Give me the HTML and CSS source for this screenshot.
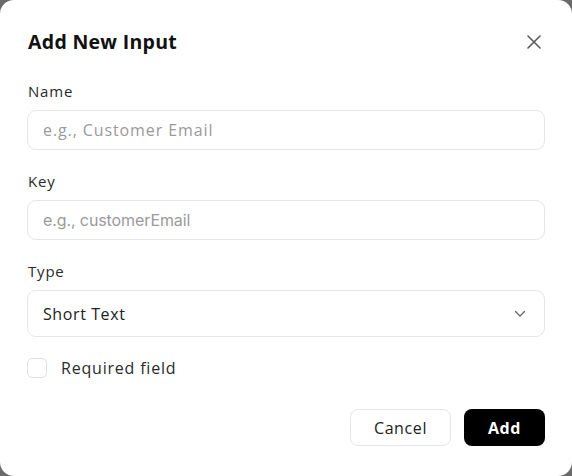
FILE: index.html
```html
<!DOCTYPE html>
<html lang="en">
<head>
<meta charset="utf-8">
<title>Add New Input</title>
<link rel="stylesheet" href="styles.css">
</head>
<body>
<div class="dialog">
  <div class="header">
    <h2 class="title">Add New Input</h2>
    <button class="close" aria-label="Close">
      <svg width="14" height="14" viewBox="0 0 14 14"><path d="M1 1L13 13M13 1L1 13" stroke="#5a5a5a" stroke-width="1.6" stroke-linecap="round" fill="none"/></svg>
    </button>
  </div>
  <div class="field">
    <label class="label">Name</label>
    <div class="input"><span class="placeholder">e.g., Customer Email</span></div>
  </div>
  <div class="field">
    <label class="label">Key</label>
    <div class="input"><span class="placeholder alt">e.g., customerEmail</span></div>
  </div>
  <div class="field last">
    <label class="label">Type</label>
    <div class="input select"><span class="value">Short Text</span>
      <svg width="12" height="8" viewBox="0 0 12 8"><path d="M1.5 1.5L6 6L10.5 1.5" stroke="#666" stroke-width="1.3" fill="none" stroke-linecap="round" stroke-linejoin="round"/></svg>
    </div>
  </div>
  <div class="check-row">
    <span class="checkbox"></span>
    <span class="check-label">Required field</span>
  </div>
  <div class="actions">
    <button class="btn cancel">Cancel</button>
    <button class="btn add">Add</button>
  </div>
</div>
</body>
</html>
```
FILE: styles.css
```css
html, body {
  margin: 0;
  padding: 0;
  background: #6a6a6a;
}
body {
  width: 572px;
  height: 476px;
  overflow: hidden;
  font-family: "Open Sans", "Liberation Sans", sans-serif;
}
.dialog {
  box-sizing: border-box;
  width: 572px;
  height: 476px;
  background: #fff;
  border-radius: 14px;
  padding: 30px 27px 30px 27px;
  display: flex;
  flex-direction: column;
}
.header {
  display: flex;
  align-items: center;
  justify-content: space-between;
  height: 24px;
  margin-bottom: 28px;
}
.title {
  margin: 0 0 0 1px;
  font-size: 19.5px;
  font-weight: 700;
  color: #111;
  letter-spacing: 0.3px;
  line-height: 24px;
}
.close {
  border: 0;
  background: none;
  padding: 0;
  margin-right: 4px;
  width: 14px;
  height: 14px;
  display: flex;
}
.field {
  display: flex;
  flex-direction: column;
  margin-bottom: 22px;
}
.field.last {
  margin-bottom: 21px;
}
.label {
  font-size: 15px;
  line-height: 18px;
  font-weight: 500;
  color: #2a2a2a;
  margin: 0 0 10px 1px;
  letter-spacing: 0.8px;
}
.input {
  box-sizing: border-box;
  height: 40px;
  border: 1px solid #e6e6e6;
  border-radius: 9px;
  display: flex;
  align-items: center;
  padding: 0 15px;
  font-size: 16px;
}
.placeholder {
  color: #9a9a9a;
  letter-spacing: 0.9px;
}
.placeholder.alt {
  font-family: Inter, "Liberation Sans", sans-serif;
  letter-spacing: -0.1px;
}
.select {
  height: 47px;
  justify-content: space-between;
  padding-right: 18px;
}
.value {
  color: #222;
  letter-spacing: 0.6px;
}
.check-row {
  display: flex;
  align-items: center;
  height: 20px;
  margin-bottom: 31px;
}
.checkbox {
  box-sizing: border-box;
  width: 20px;
  height: 20px;
  border: 1px solid #e0e0e0;
  border-radius: 5px;
  margin-right: 14px;
}
.check-label {
  font-size: 16px;
  font-weight: 500;
  color: #2a2a2a;
  letter-spacing: 0.8px;
}
.actions {
  display: flex;
  justify-content: flex-end;
  gap: 13px;
}
.btn {
  box-sizing: border-box;
  height: 37px;
  border-radius: 8px;
  font-family: "Open Sans", "Liberation Sans", sans-serif;
  font-size: 16px;
  letter-spacing: 0.6px;
  cursor: pointer;
}
.cancel {
  width: 101px;
  background: #fff;
  border: 1px solid #e6e6e6;
  color: #222;
  font-weight: 500;
}
.add {
  width: 81px;
  background: #000;
  border: 0;
  color: #fff;
  font-weight: 700;
}
```
